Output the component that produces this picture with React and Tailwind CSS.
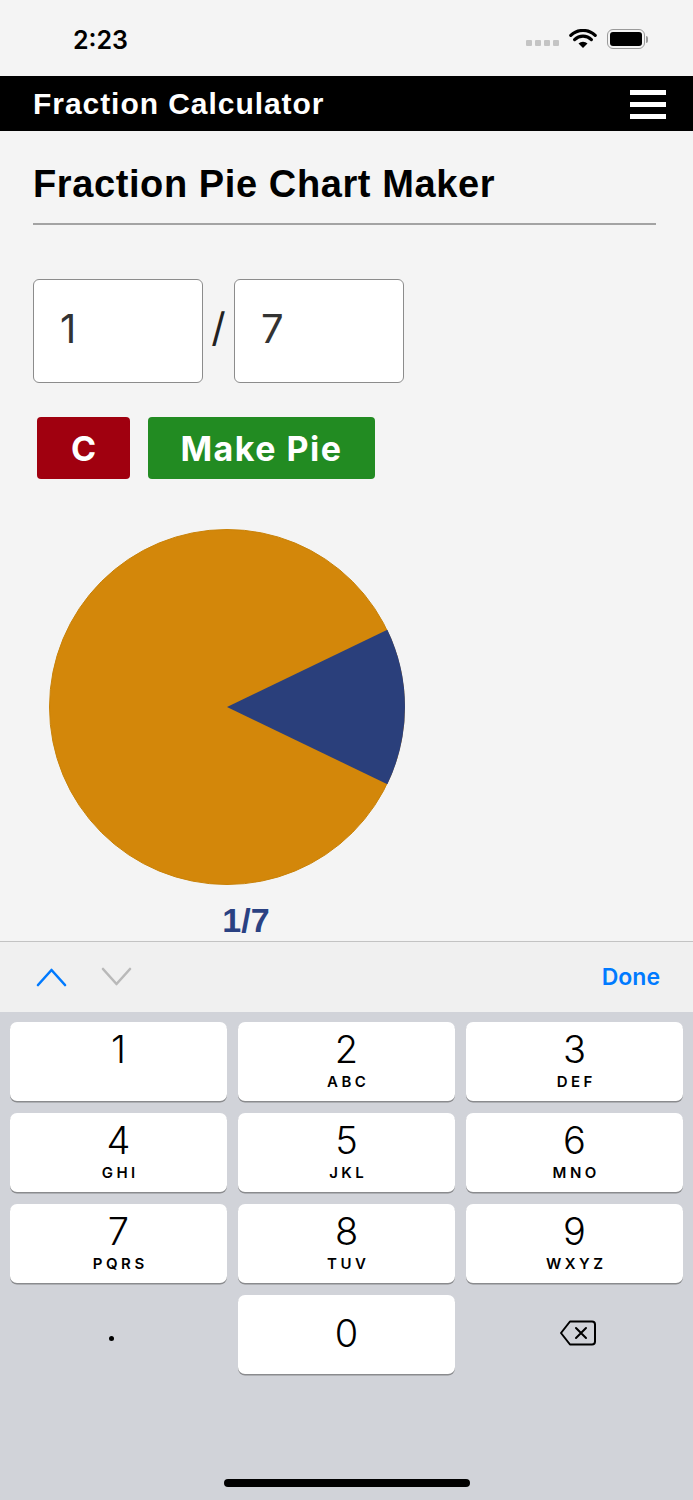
import React from 'react';

const keys = [
    { d: '1', l: '' },
    { d: '2', l: 'ABC' },
    { d: '3', l: 'DEF' },
    { d: '4', l: 'GHI' },
    { d: '5', l: 'JKL' },
    { d: '6', l: 'MNO' },
    { d: '7', l: 'PQRS' },
    { d: '8', l: 'TUV' },
    { d: '9', l: 'WXYZ' },
];

const Pie = () => {
    // 1/7 slice centred on the right
    const r = 178;
    const cx = 178;
    const cy = 178;
    const a = Math.PI / 7;
    const x1 = cx + r * Math.cos(-a);
    const y1 = cy + r * Math.sin(-a);
    const x2 = cx + r * Math.cos(a);
    const y2 = cy + r * Math.sin(a);
    return (
        <svg width="356" height="356" viewBox="0 0 356 356">
            <circle cx={cx} cy={cy} r={r - 0.5} fill="#d3870a" stroke="#c98208" strokeWidth="1" />
            <path d={`M${cx} ${cy} L${x1} ${y1} A${r} ${r} 0 0 1 ${x2} ${y2} Z`} fill="#2a3f7b" />
        </svg>
    );
};

const App = () => {
    return (
        <div className="w-[693px] h-[1500px] bg-[#f4f4f4] flex flex-col overflow-hidden" style={{ fontFamily: '"Liberation Sans", Arial, sans-serif' }}>
            {/* status bar */}
            <div className="h-[76px] flex items-center justify-between pl-[73px] pr-[45px] shrink-0">
                <span className="text-[25px] font-semibold text-black mt-[5px]" style={{ fontFamily: 'Inter, sans-serif' }}>2:23</span>
                <div className="flex items-center gap-[10px] mt-[2px]">
                    <div className="flex gap-[3px] mt-[7px]">
                        <span className="w-[6px] h-[6px] rounded-[1px] bg-[#c4c4c4]" />
                        <span className="w-[6px] h-[6px] rounded-[1px] bg-[#c4c4c4]" />
                        <span className="w-[6px] h-[6px] rounded-[1px] bg-[#c4c4c4]" />
                        <span className="w-[6px] h-[6px] rounded-[1px] bg-[#c4c4c4]" />
                    </div>
                    <svg width="28" height="20" viewBox="0 0 28 20">
                        <path d="M14 19 L9.5 14.5 A6.5 6.5 0 0 1 18.5 14.5 Z" fill="#000" />
                        <path d="M5.6 10.6 A12 12 0 0 1 22.4 10.6" stroke="#000" strokeWidth="3.2" fill="none" strokeLinecap="round" />
                        <path d="M1.8 6.4 A17.5 17.5 0 0 1 26.2 6.4" stroke="#000" strokeWidth="3.2" fill="none" strokeLinecap="round" />
                    </svg>
                    <div className="flex items-center">
                        <div className="w-[38px] h-[20px] rounded-[6px] border-[1.5px] border-[#9a9a9a] p-[2px]">
                            <div className="w-full h-full rounded-[3px] bg-black" />
                        </div>
                        <div className="w-[2px] h-[7px] rounded-r bg-[#9a9a9a] ml-[1px]" />
                    </div>
                </div>
            </div>

            {/* header */}
            <div className="h-[55px] bg-black flex items-center justify-between pl-[33px] pr-[27px] shrink-0">
                <span className="text-white text-[30px] font-bold tracking-[0.95px]">Fraction Calculator</span>
                <div className="flex flex-col gap-[7px] mt-[2px]">
                    <span className="w-[36px] h-[5px] bg-white" />
                    <span className="w-[36px] h-[5px] bg-white" />
                    <span className="w-[36px] h-[5px] bg-white" />
                </div>
            </div>

            {/* content */}
            <div className="flex-1 px-[33px] pt-[27px]">
                <h1 className="text-[38px] font-bold text-black leading-[52px] tracking-[0.6px]">Fraction Pie Chart Maker</h1>
                <div className="mt-[13px] h-[2px] bg-[#a3a3a3] w-[623px]" />

                <div className="mt-[54px] flex items-center">
                    <div className="w-[170px] h-[104px] bg-white border border-[#8c8c8c] rounded-[6px] flex items-center pl-[26px] pb-[4px] text-[40px] text-[#333]" style={{ fontFamily: 'Inter, sans-serif' }}>1</div>
                    <span className="w-[31px] text-center text-[40px] text-[#222] pb-[6px]" style={{ fontFamily: 'Inter, sans-serif' }}>/</span>
                    <div className="w-[170px] h-[104px] bg-white border border-[#8c8c8c] rounded-[6px] flex items-center pl-[26px] pb-[4px] text-[40px] text-[#333]" style={{ fontFamily: 'Inter, sans-serif' }}>7</div>
                </div>

                <div className="mt-[34px] flex items-center gap-[18px] pl-[4px]">
                    <button className="w-[93px] h-[62px] bg-[#a0000f] rounded-[4px] text-white text-[34px] font-bold" style={{ fontFamily: 'Inter, sans-serif' }}>C</button>
                    <button className="w-[227px] h-[62px] bg-[#228b22] rounded-[4px] text-white text-[34px] font-bold tracking-[1.5px]" style={{ fontFamily: 'Inter, sans-serif' }}>Make Pie</button>
                </div>

                <div className="mt-[50px] pl-[16px]">
                    <Pie />
                </div>
                <div className="w-[420px] text-center text-[34px] font-bold text-[#2a4182] leading-[40px] mt-[15px] pl-[6px]">1/7</div>
            </div>

            {/* keyboard toolbar */}
            <div className="h-[71px] bg-[#f0f0f0] border-t border-[#c3c3c3] flex items-center justify-between pl-[36px] pr-[33px] shrink-0">
                <div className="flex items-center gap-[34px]">
                    <svg width="31" height="20" viewBox="0 0 31 20">
                        <path d="M2 18 L15.5 3 L29 18" stroke="#007aff" strokeWidth="2.6" fill="none" strokeLinecap="round" strokeLinejoin="round" />
                    </svg>
                    <svg width="31" height="20" viewBox="0 0 31 20">
                        <path d="M2 2 L15.5 17 L29 2" stroke="#b9b9b9" strokeWidth="2.6" fill="none" strokeLinecap="round" strokeLinejoin="round" />
                    </svg>
                </div>
                <span className="text-[#007aff] text-[23px] font-semibold" style={{ fontFamily: 'Inter, sans-serif' }}>Done</span>
            </div>

            {/* keypad */}
            <div className="h-[488px] bg-[#d1d3d9] px-[10px] pt-[10px] shrink-0 flex flex-col" style={{ fontFamily: 'Inter, sans-serif' }}>
                <div className="grid grid-cols-3 gap-x-[11px] gap-y-[12px]">
                    {keys.map((k) => (
                        <div key={k.d} className="h-[79px] bg-white rounded-[7px] shadow-[0_1.5px_0_#8a8b8e] flex flex-col items-center pt-[5px]">
                            <span className="text-[38px] font-light leading-[44px] text-black">{k.d}</span>
                            {k.l && <span className="text-[15px] font-semibold tracking-[3.5px] pl-[3.5px] leading-[16px] mt-[3px] text-black">{k.l}</span>}
                        </div>
                    ))}
                    <div className="h-[79px] flex items-center justify-center pr-[14px]">
                        <span className="w-[5px] h-[5px] rounded-full bg-black mt-[8px]" />
                    </div>
                    <div className="h-[79px] bg-white rounded-[7px] shadow-[0_1.5px_0_#8a8b8e] flex items-center justify-center pb-[4px]">
                        <span className="text-[38px] font-light leading-[44px] text-black">0</span>
                    </div>
                    <div className="h-[79px] flex items-center justify-center pl-[6px] pb-[4px]">
                        <svg width="38" height="28" viewBox="0 0 38 28">
                            <path d="M11 2.5 H33 a3 3 0 0 1 3 3 V22.5 a3 3 0 0 1 -3 3 H11 L2 14 Z" stroke="#000" strokeWidth="2" fill="none" strokeLinejoin="round" />
                            <path d="M17 9 L27 19 M27 9 L17 19" stroke="#000" strokeWidth="2" strokeLinecap="round" />
                        </svg>
                    </div>
                </div>
                <div className="flex-1" />
                <div className="flex justify-center pb-[13px]">
                    <span className="w-[246px] h-[8px] rounded-full bg-black" />
                </div>
            </div>
        </div>
    );
};

export default App;
